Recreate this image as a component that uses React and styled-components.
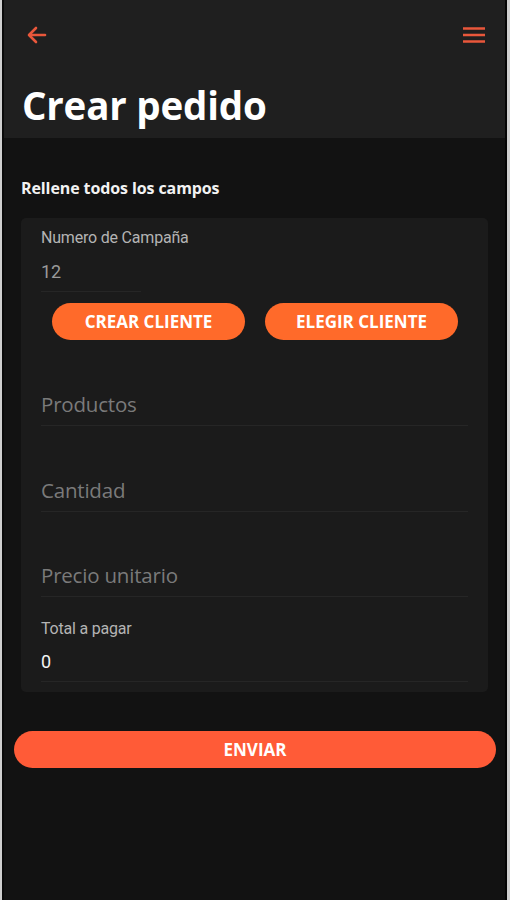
import React from "react";
import styled, { createGlobalStyle } from "styled-components";

const Global = createGlobalStyle`
  html, body { margin: 0; padding: 0; background: #cfcfcf; }
  * { box-sizing: border-box; }
`;

const Frame = styled.div`
  min-height: 900px;
  padding: 0 3px 0 2px;
  background: #cfcfcf;
  display: flex;
`;

const Screen = styled.div`
  flex: 1;
  display: flex;
  flex-direction: column;
  background: #121212;
  border-left: 2px solid #0a0a0a;
  border-right: 2px solid #050505;
  min-height: 900px;
`;

const Header = styled.header`
  background: #1f1f1f;
  height: 138px;
  padding: 22px 18px 0 18px;
  display: flex;
  flex-direction: column;
`;

const TopBar = styled.div`
  display: flex;
  justify-content: space-between;
  align-items: center;
  height: 26px;
  padding: 0 0 0 2px;
`;

const IconButton = styled.button`
  background: none;
  border: none;
  padding: 0;
  width: 26px;
  height: 26px;
  display: flex;
  align-items: center;
  justify-content: center;
  color: #e9573b;
`;

const Title = styled.h1`
  margin: 35px 0 0 0;
  font-family: "Open Sans", sans-serif;
  font-weight: 700;
  font-size: 38.5px;
  line-height: 44px;
  color: #ffffff;
  letter-spacing: -0.2px;
`;

const Main = styled.main`
  padding: 40px 9px 0 10px;
  display: flex;
  flex-direction: column;
`;

const Subtitle = styled.h2`
  margin: 0 0 20px 7px;
  font-family: "Open Sans", sans-serif;
  font-weight: 700;
  font-size: 16px;
  line-height: 20px;
  color: #f2f2f2;
  letter-spacing: -0.1px;
`;

const Card = styled.section`
  margin: 0 8px 0 7px;
  background: #1b1b1b;
  border-radius: 5px;
  padding: 10px 20px 10px 20px;
  display: flex;
  flex-direction: column;
`;

const Field = styled.div`
  display: flex;
  flex-direction: column;
  width: ${(p) => (p.$narrow ? "100px" : "100%")};
  border-bottom: 1px solid #262626;
  margin-top: ${(p) => p.$mt || 0}px;
`;

const Label = styled.label`
  font-family: "Roboto", sans-serif;
  font-size: 16px;
  line-height: 20px;
  color: #b4b4b4;
  white-space: nowrap;
  letter-spacing: -0.2px;
`;

const Value = styled.div`
  font-family: "Roboto", sans-serif;
  font-size: 18px;
  line-height: 22px;
  color: ${(p) => (p.$bright ? "#f4f4f4" : "#9a9a9a")};
  padding: ${(p) => (p.$bright ? "12px 0 8px 0" : "13px 0 8px 0")};
`;

const Placeholder = styled.div`
  font-family: "Open Sans", sans-serif;
  font-size: 20.5px;
  line-height: 26px;
  color: #7a7a7a;
  letter-spacing: -0.2px;
  padding: 0 0 8px 0;
`;

const ButtonRow = styled.div`
  display: flex;
  gap: 20px;
  padding: 11px 10px 0 11px;
`;

const Pill = styled.button`
  flex: 1;
  height: 37px;
  border: none;
  border-radius: 19px;
  background: #ff6a2a;
  color: #ffffff;
  font-family: "Open Sans", sans-serif;
  font-weight: 700;
  font-size: 17px;
  letter-spacing: 0;
  text-transform: uppercase;
  padding: 0;
`;

const Submit = styled(Pill)`
  margin: 39px 0 0 0;
  flex: none;
  width: 100%;
  background: #ff5b37;
`;

const ArrowIcon = () => (
  <svg width="24" height="24" viewBox="0 0 24 24" fill="none" stroke="currentColor" strokeWidth="2.6" strokeLinecap="round" strokeLinejoin="round">
    <path d="M20 12H5" />
    <path d="M11 5l-7 7 7 7" />
  </svg>
);

const MenuIcon = () => (
  <svg width="24" height="24" viewBox="0 0 24 24" fill="none" stroke="currentColor" strokeWidth="2.4">
    <path d="M1 5.5h22M1 12h22M1 18.5h22" />
  </svg>
);

export default function App() {
  return (
    <>
      <Global />
      <Frame>
        <Screen>
          <Header>
            <TopBar>
              <IconButton aria-label="Volver"><ArrowIcon /></IconButton>
              <IconButton aria-label="Menú"><MenuIcon /></IconButton>
            </TopBar>
            <Title>Crear pedido</Title>
          </Header>
          <Main>
            <Subtitle>Rellene todos los campos</Subtitle>
            <Card>
              <Field $narrow>
                <Label>Numero de Campaña</Label>
                <Value>12</Value>
              </Field>
              <ButtonRow>
                <Pill>Crear cliente</Pill>
                <Pill>Elegir cliente</Pill>
              </ButtonRow>
              <Field $mt={51}>
                <Placeholder>Productos</Placeholder>
              </Field>
              <Field $mt={51}>
                <Placeholder>Cantidad</Placeholder>
              </Field>
              <Field $mt={50}>
                <Placeholder>Precio unitario</Placeholder>
              </Field>
              <Field $mt={22}>
                <Label>Total a pagar</Label>
                <Value $bright>0</Value>
              </Field>
            </Card>
            <Submit>Enviar</Submit>
          </Main>
        </Screen>
      </Frame>
    </>
  );
}
